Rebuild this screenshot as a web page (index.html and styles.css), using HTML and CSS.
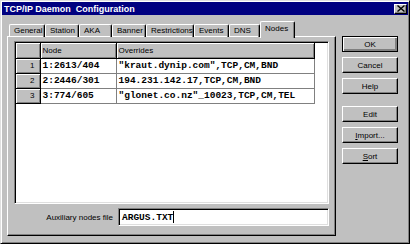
FILE: index.html
```html
<!DOCTYPE html>
<html lang="en">
<head>
    <meta charset="UTF-8">
    <title>TCP/IP Daemon Configuration</title>
    <link rel="stylesheet" href="styles.css">
</head>
<body>
    <div class="dialog">
        <div class="titlebar">
            <span class="title">TCP/IP Daemon&nbsp; Configuration</span>
            <span class="close">
                <svg width="8" height="7" viewBox="0 0 8 7"><path d="M0.5 0.5 L7.5 6.5 M7.5 0.5 L0.5 6.5" stroke="#000" stroke-width="1.4"/></svg>
            </span>
        </div>

        <div class="content">
            <div class="sheet">
                <div class="tabs">
                    <div class="tab">General</div>
                    <div class="tab">Station</div>
                    <div class="tab">AKA</div>
                    <div class="tab">Banner</div>
                    <div class="tab">Restrictions</div>
                    <div class="tab">Events</div>
                    <div class="tab">DNS</div>
                    <div class="tab active">Nodes</div>
                </div>

                <div class="panel">
                    <div class="grid">
                        <table>
                            <tr>
                                <th class="corner"></th>
                                <th class="col-node">Node</th>
                                <th class="col-over">Overrides</th>
                            </tr>
                            <tr>
                                <th class="rownum">1</th>
                                <td>1:2613/404</td>
                                <td>"kraut.dynip.com",TCP,CM,BND</td>
                            </tr>
                            <tr>
                                <th class="rownum">2</th>
                                <td>2:2446/301</td>
                                <td>194.231.142.17,TCP,CM,BND</td>
                            </tr>
                            <tr>
                                <th class="rownum">3</th>
                                <td>3:774/605</td>
                                <td>"glonet.co.nz"_10023,TCP,CM,TEL</td>
                            </tr>
                        </table>
                    </div>

                    <div class="aux">
                        <label>Auxiliary nodes file</label>
                        <div class="field">ARGUS.TXT<span class="caret"></span></div>
                    </div>
                </div>
            </div>

            <div class="buttons">
                <button class="btn default">OK</button>
                <button class="btn">Cancel</button>
                <button class="btn">Help</button>
                <button class="btn spaced">Edit</button>
                <button class="btn"><u>I</u>mport...</button>
                <button class="btn"><u>S</u>ort</button>
            </div>
        </div>
    </div>
</body>
</html>
```

FILE: styles.css
```css
body {
    margin: 0;
    background: #c0c0c0;
    font-family: "Liberation Sans", Arial, sans-serif;
    font-size: 8px;
    color: #000;
}
.dialog {
    width: 410px;
    height: 244px;
    box-sizing: border-box;
    padding: 1px;
    border: 1px solid;
    border-color: #dfdfdf #000 #000 #dfdfdf;
    box-shadow: inset 1px 1px #fff, inset -1px -1px #808080;
    background: #c0c0c0;
    display: flex;
    flex-direction: column;
}
.titlebar {
    height: 13px;
    background: #000080;
    color: #fff;
    display: flex;
    align-items: center;
    justify-content: space-between;
    padding: 0 1px 0 2px;
}
.title {
    font-weight: bold;
    font-size: 9px;
    white-space: pre;
}
.close {
    width: 13px;
    height: 10px;
    box-sizing: border-box;
    background: #c0c0c0;
    border: 1px solid;
    border-color: #fff #000 #000 #fff;
    box-shadow: inset -1px -1px #808080;
    display: flex;
    align-items: center;
    justify-content: center;
}
.close svg {
    display: block;
}

.content {
    flex: 1;
    display: flex;
    gap: 6px;
    padding: 6px 0 0 5px;
}
.sheet {
    width: 329px;
    display: flex;
    flex-direction: column;
}

/* tabs */
.tabs {
    height: 15px;
    display: grid;
    grid-template-columns: 36px 34px 33px 34px 48px 35px 31px 35px;
    align-items: end;
    padding-left: 2px;
    position: relative;
    z-index: 1;
}
.tab {
    height: 13px;
    box-sizing: border-box;
    padding-left: 4px;
    line-height: 11px;
    white-space: nowrap;
    border-top: 1px solid #fff;
    border-left: 1px solid #fff;
    border-right: 1px solid #000;
    border-radius: 2px 2px 0 0;
    box-shadow: inset -1px 0 #808080;
}
.tab.active {
    height: 17px;
    margin-bottom: -1px;
    padding-top: 1px;
    background: #c0c0c0;
}

.panel {
    height: 200px;
    box-sizing: border-box;
    border: 1px solid;
    border-color: #fff #000 #000 #fff;
    box-shadow: inset -1px -1px #808080;
    padding: 4px 6px 8px 6px;
    display: flex;
    flex-direction: column;
    gap: 4px;
}

/* node grid */
.grid {
    height: 163px;
    box-sizing: border-box;
    background: #fff;
    border: 1px solid;
    border-color: #808080 #fff #fff #808080;
    box-shadow: inset 1px 1px #000, inset -1px -1px #dfdfdf;
    padding: 1px;
    overflow: hidden;
}
.grid table {
    border-collapse: collapse;
    table-layout: fixed;
}
.grid tr {
    height: 15px;
}
.grid th {
    background: #c0c0c0;
    font-weight: normal;
    text-align: left;
    padding: 0 0 0 2px;
    box-sizing: border-box;
    box-shadow: inset 1px 1px #fff, inset -1px -1px #808080;
    border-right: 1px solid #000;
    border-bottom: 1px solid #000;
    white-space: nowrap;
}
.grid th.corner {
    width: 24px;
}
.grid th.col-node {
    width: 76px;
}
.grid th.col-over {
    width: 198px;
}
.grid th.rownum {
    text-align: right;
    padding: 0 5px 0 0;
}
.grid td {
    font-family: "Liberation Mono", "DejaVu Sans Mono", monospace;
    font-weight: bold;
    font-size: 9.5px;
    padding: 0 0 0 2px;
    border-right: 1px solid #808080;
    border-bottom: 1px solid #808080;
    white-space: nowrap;
}

.aux {
    height: 18px;
    display: flex;
    align-items: center;
    gap: 5px;
}
.aux label {
    flex: 1;
    text-align: right;
}
.field {
    width: 211px;
    height: 18px;
    box-sizing: border-box;
    background: #fff;
    border: 1px solid;
    border-color: #808080 #fff #fff #808080;
    box-shadow: inset 1px 1px #000, inset -1px -1px #dfdfdf;
    padding: 0 0 0 3px;
    font-family: "Liberation Mono", "DejaVu Sans Mono", monospace;
    font-weight: bold;
    font-size: 9.5px;
    display: flex;
    align-items: center;
}
.caret {
    width: 1px;
    height: 12px;
    background: #000;
}

/* buttons */
.buttons {
    width: 56px;
    display: flex;
    flex-direction: column;
    gap: 5px;
    padding-top: 15px;
}
.btn {
    height: 16px;
    margin: 0;
    padding: 0;
    font-family: "Liberation Sans", Arial, sans-serif;
    font-size: 8px;
    color: #000;
    background: #c0c0c0;
    border: 1px solid;
    border-color: #fff #000 #000 #fff;
    box-shadow: inset -1px -1px #808080;
}
.btn.default {
    border-color: #000;
    box-shadow: inset 1px 1px #fff, inset -2px -2px #808080;
}
.btn.spaced {
    margin-top: 7px;
}
```
